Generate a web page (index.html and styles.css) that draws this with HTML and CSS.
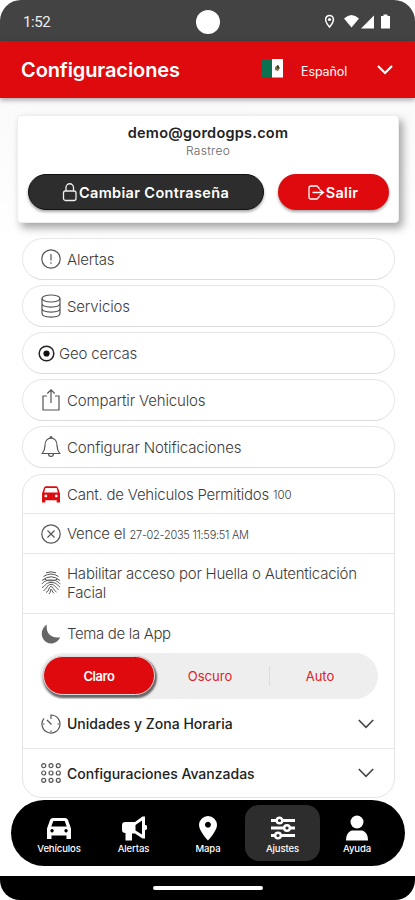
FILE: index.html
```html
<!DOCTYPE html>
<html lang="es">
<head>
  <meta charset="UTF-8">
  <meta name="viewport" content="width=device-width, initial-scale=1.0">
  <title>Configuraciones</title>
  <link rel="stylesheet" href="styles.css">
</head>
<body>
  <div class="status">
    <span class="clock">1:52</span>
    <span class="camera"></span>
    <svg class="status-icons" width="68" height="16" viewBox="0 0 68 16">
      <path d="M3.500 1.500a3.900 3.900 0 0 0-3.900 3.900C-.4 8.500 3.500 13 3.500 13s3.900-4.500 3.900-7.600A3.900 3.900 0 0 0 3.500 1.500z" transform="translate(1)" fill="none" stroke="#fff" stroke-width="1.500"/>
      <circle cx="4.500" cy="5.500" r="1.600" fill="#fff"/>
      <path d="M19 4.500Q26.500 -2.500 34 4.500L26.500 13.500z" fill="#fff"/>
      <path d="M49 1.500V14.500H36z" fill="#fff"/>
      <path d="M58.500 .5h4V2H65V14.500H56V2h2.500z" fill="#fff"/>
    </svg>
  </div>

  <header class="topbar">
    <h1>Configuraciones</h1>
    <svg class="flag" width="29" height="19" viewBox="0 0 29 19">
      <path d="M0 0h10v18.500H0z" fill="#0b7150"/>
      <path d="M10 0h11v18.500H10z" fill="#fff"/>
      <path d="M27 0h1.500v18.500H27z" fill="#c80d2b"/>
      <path d="M13 8l3-2 2 3-2 3-3-1z" fill="#85703f"/>
      <path d="M15 6l2 1v3l-2-1z" fill="#3f3a2c"/>
    </svg>
    <span class="lang">Español</span>
    <svg class="lang-arrow" width="16" height="10" viewBox="0 0 16 10"><path d="M1 1l7 7 7-7" fill="none" stroke="#fff" stroke-width="2.200"/></svg>
  </header>

  <main>
    <section class="account">
      <strong class="email">demo@gordogps.com</strong>
      <span class="role">Rastreo</span>
      <div class="buttons">
        <button class="btn dark">
          <svg width="16" height="19" viewBox="0 0 16 19" fill="none" stroke="#eee" stroke-width="1.300"><rect x="1.500" y="8" width="12.500" height="9.500" rx="2"/><path d="M4 8V4.500a3.750 3.750 0 0 1 7.500 0V8"/></svg>
          <span>Cambiar Contraseña</span>
        </button>
        <button class="btn red">
          <svg width="17" height="15" viewBox="0 0 17 15" fill="none" stroke="#fff" stroke-width="1.300"><path d="M11 4V3L9 1H3a2 2 0 0 0-2 2v9a2 2 0 0 0 2 2h6l2-2v-1M4.500 7.500H15M11.500 4.500l4 3-4 3"/></svg>
          <span>Salir</span>
        </button>
      </div>
    </section>

    <nav class="links">
      <a class="link">
        <svg class="icon" viewBox="0 0 20 20"><circle cx="10" cy="10" r="9.200"/><path d="M10 5v6.500M10 13.300v1.500"/></svg>
        <span>Alertas</span>
      </a>
      <a class="link">
        <svg class="icon tall" viewBox="0 0 20 24"><ellipse cx="10" cy="4.500" rx="9" ry="3.500"/><path d="M1 4.500v15c0 4.700 18 4.700 18 0v-15M1 9.500c0 4.700 18 4.700 18 0M1 14.500c0 4.700 18 4.700 18 0"/></svg>
        <span>Servicios</span>
      </a>
      <a class="link geo">
        <svg class="icon target" viewBox="0 0 17 17"><circle cx="8.500" cy="8.500" r="7.300"/><circle class="dot" cx="8.500" cy="8.500" r="3.100"/></svg>
        <span>Geo cercas</span>
      </a>
      <a class="link">
        <svg class="icon tall" viewBox="0 0 20 24"><path d="M6 8H2v14h16V8h-4M10 15V2M6.300 5.500L10 1.800l3.700 3.700"/></svg>
        <span>Compartir Vehiculos</span>
      </a>
      <a class="link">
        <svg class="icon tall" viewBox="0 0 20 24"><path d="M1.200 18.500c2-2.500 2.800-4 2.800-8C4 6 6.500 3.200 10 3.200s6 2.800 6 7.300c0 4 .8 5.500 2.800 8zM7.500 18.500c0 4 5 4 5 0M9 3c0-2 2-2 2 0"/></svg>
        <span>Configurar Notificaciones</span>
      </a>
    </nav>

    <section class="panel">
      <div class="row cars">
        <svg class="icon car" viewBox="0 0 20 18"><path fill-rule="evenodd" d="M.5 8l2-6q.5-1.700 2-1.700h11q1.500 0 2 1.700l2 6v9.500h-3.500V15H4v2.500H.5zM4 2.200L2.800 6.800h14.400L16 2.200zM4.500 9a1.500 1.500 0 1 0 .1 0zM15.500 9a1.500 1.500 0 1 0 .1 0z"/></svg>
        <span>Cant. de Vehiculos Permitidos</span> <small>100</small>
      </div>
      <div class="row expires">
        <svg class="icon" viewBox="0 0 20 20"><circle cx="10" cy="10" r="9.200"/><path d="M6.500 6.500l7 7M13.500 6.500l-7 7"/></svg>
        <span>Vence el</span> <small class="date">27-02-2035 11:59:51 AM</small>
      </div>
      <div class="row finger">
        <svg class="icon tall print" viewBox="0 0 20 24"><path d="M5 1.800q5-2 10 0M2.500 5.500q7.500-5 15 0M1 9.500q9-7.500 18 0M3.500 8c4 2.500 9 2.500 13 0M.8 13c3-3.500 6-4 9.200-4s6.200.5 9.200 4M1 16.500c3-.5 3-5 9-5s6.500 3 9 4.500M2.500 19.500c4-1.500 3-6 7.500-6s4.500 3.500 7.500 5M5 21.500c3.500-1.500 2.500-6 5-6s2 3.500 5.500 5.500M8 23c2-1.500 1-5 2-5s1 3 3 4.500"/></svg>
        <p>Habilitar acceso por Huella o Autenticación<br>Facial</p>
      </div>
      <div class="row theme">
        <svg class="icon moon" viewBox="0 0 21 22"><path d="M6 .5C4.500 8 9 16.500 20.500 14.500 17 23 6 23.500 2 16.500-1.200 11 .3 4 6 .5z"/></svg>
        <span>Tema de la App</span>
      </div>
      <div class="segmented">
        <span class="seg active">Claro</span>
        <span class="seg">Oscuro</span>
        <span class="seg auto">Auto</span>
      </div>
      <div class="row fold units">
        <svg class="icon" viewBox="0 0 20 20"><path d="M10 5V1a9 9 0 1 1-7 3.300M6 6l4.500 4.500M2 10h1.500M10 18v-1.500M18 10h-1.500"/></svg>
        <span>Unidades y Zona Horaria</span>
        <svg class="arrow" viewBox="0 0 16 10"><path d="M.8 1L8 8.300 15.200 1"/></svg>
      </div>
      <div class="row fold advanced">
        <svg class="icon" viewBox="0 0 20 20"><circle cx="2.700" cy="2.700" r="2"/><circle cx="10" cy="2.700" r="2"/><circle cx="17.300" cy="2.700" r="2"/><circle cx="2.700" cy="10" r="2"/><circle cx="10" cy="10" r="2"/><circle cx="17.300" cy="10" r="2"/><circle cx="2.700" cy="17.300" r="2"/><circle cx="10" cy="17.300" r="2"/><circle cx="17.300" cy="17.300" r="2"/></svg>
        <span>Configuraciones Avanzadas</span>
        <svg class="arrow" viewBox="0 0 16 10"><path d="M.8 1L8 8.300 15.200 1"/></svg>
      </div>
    </section>
  </main>

  <nav class="tabs">
    <a class="tab">
      <svg viewBox="0 0 26 26"><path fill-rule="evenodd" d="M1 13.500L4 5q.8-2 3-2h12q2.200 0 3 2l3 8.500V24h-4.500v-3.500h-15V24H1zM7.300 6L5.300 11.500h15.400L18.700 6zM6 14a1.700 1.700 0 1 0 .1 0zM20 14a1.700 1.700 0 1 0 .1 0z"/></svg>
      <span>Vehículos</span>
    </a>
    <a class="tab">
      <svg viewBox="0 0 26 26"><path fill-rule="evenodd" d="M24 1.500V10a2.500 2.500 0 0 1 0 5v8.500h-2.500L14 18.500h-3V25.500H4.500V18Q1 18 1 15v-5q0-3 3.500-3H14l7.500-5.500zM21 5.500L14.500 10v5.500L21 19.500z"/></svg>
      <span>Alertas</span>
    </a>
    <a class="tab">
      <svg viewBox="0 0 26 26"><path fill-rule="evenodd" d="M13 1a9 9 0 0 0-9 9c0 6 9 15.500 9 15.500S22 16 22 10a9 9 0 0 0-9-9zM13 6.800a3 3 0 1 1-.1 0z"/></svg>
      <span>Mapa</span>
    </a>
    <a class="tab current">
      <svg viewBox="0 0 26 26"><path d="M1 4h24v3H1zM1 11.500h24v3H1zM1 19h24v3H1z"/><g fill="#2d2d2d" stroke="#fff" stroke-width="2.400"><circle cx="9.500" cy="5.500" r="2.800"/><circle cx="17" cy="13" r="2.800"/><circle cx="8" cy="20.500" r="2.800"/></g></svg>
      <span>Ajustes</span>
    </a>
    <a class="tab">
      <svg viewBox="0 0 26 26"><circle cx="13" cy="7" r="6.500"/><path d="M2 25.500c0-7.500 4-10 7-10h8c3 0 7 2.500 7 10z"/></svg>
      <span>Ayuda</span>
    </a>
  </nav>

  <footer class="system"><span class="handle"></span></footer>
</body>
</html>
```

FILE: styles.css
```css
* {
  box-sizing: border-box;
}
body {
  margin: 0;
  height: 900px;
  display: flex;
  flex-direction: column;
  overflow: hidden;
  background: #fff;
  color: #3c3c3c;
  font-family: Inter, "Liberation Sans", sans-serif;
}
.status {
  display: grid;
  grid-template-columns: 1fr 24px 1fr;
  align-items: center;
  height: 41px;
  flex: none;
  padding: 2px 22px 0 23px;
  background: #434343;
  border-radius: 21px 21px 0 0;
}
.clock {
  color: #eee;
  font: 15px Roboto, sans-serif;
  letter-spacing: -0.4px;
}
.camera {
  width: 24px;
  height: 24px;
  border-radius: 50%;
  background: #fff;
}
.status-icons {
  justify-self: end;
}
.topbar {
  position: relative;
  display: flex;
  align-items: center;
  height: 57px;
  flex: none;
  padding: 0 22px 0 21px;
  background: #df0a0d;
  color: #fff;
  box-shadow: 0 2px 5px rgba(0, 0, 0, 0.35);
}
h1 {
  flex: 1;
  margin: 0;
  font-size: 20px;
  font-weight: 600;
  letter-spacing: -0.1px;
}
.flag {
  margin: -3px 10px 0 0;
}
.lang {
  width: 48px;
  margin: 4px 28px 0 0;
  font-size: 12.5px;
  letter-spacing: -0.1px;
}
main {
  height: 702px;
  flex: none;
  padding: 17px 0 0;
  background: linear-gradient(#fafafa, #fff 150px);
}
.account {
  display: flex;
  flex-direction: column;
  align-items: center;
  width: 382px;
  height: 108px;
  margin: 0 0 15px 17px;
  padding-top: 7px;
  border: 1px solid #eee;
  border-radius: 4px;
  background: #fff;
  box-shadow: 4px 5px 9px rgba(0, 0, 0, 0.35);
}
.email {
  color: #222;
  font-size: 14.5px;
  font-weight: 600;
  line-height: 19px;
  letter-spacing: 0.25px;
}
.role {
  color: #666;
  font-size: 12px;
  font-weight: 300;
  line-height: 17px;
  letter-spacing: 0.3px;
}
.buttons {
  display: flex;
  gap: 14px;
  margin-top: 15px;
}
.btn {
  display: flex;
  align-items: center;
  justify-content: center;
  gap: 1px;
  height: 36px;
  padding: 0;
  border: 0;
  border-radius: 18px;
  color: #fff;
  font: 600 14.5px Inter, sans-serif;
  box-shadow: 0 2px 3px rgba(0, 0, 0, 0.35);
}
.dark {
  width: 236px;
  background: #2d2d2d;
  border: 1px solid #111;
  letter-spacing: 0.35px;
}
.red {
  width: 111px;
  background: #df0a0d;
  letter-spacing: 0.3px;
}
.links {
  display: flex;
  flex-direction: column;
  gap: 5px;
  margin: 0 20px 6px 22px;
}
.link {
  display: flex;
  align-items: center;
  gap: 6px;
  height: 42px;
  padding-left: 18px;
  border: 1px solid #e6e6e6;
  border-bottom-color: #dcdcdc;
  border-radius: 21px;
  background: #fff;
  font-size: 15px;
  font-weight: 300;
  letter-spacing: -0.15px;
}
.geo {
  padding-left: 15px;
  gap: 4px;
}
.icon {
  width: 20px;
  height: 20px;
  flex: none;
  fill: none;
  stroke: #555;
  stroke-width: 1.2;
}
.tall {
  height: 24px;
}
.print {
  stroke-width: 1;
}
.target {
  width: 17px;
  height: 17px;
  stroke: #222;
  stroke-width: 1.5;
}
.target .dot {
  fill: #111;
  stroke: none;
}
.panel {
  height: 324px;
  margin: 0 20px 0 22px;
  border: 1px solid #e4e4e4;
  border-radius: 20px;
  background: #fff;
}
.row {
  display: flex;
  align-items: center;
  padding-left: 18px;
  border-bottom: 1px solid #e8e8e8;
  font-size: 15px;
  font-weight: 300;
  letter-spacing: -0.23px;
}
.row .icon {
  margin-right: 6px;
}
.row small {
  margin: 2px 0 0 4px;
  font-size: 11.5px;
  letter-spacing: 0;
}
.row .date {
  font-size: 11px;
  letter-spacing: -0.27px;
}
.row p {
  margin: 0;
  line-height: 19px;
  white-space: nowrap;
}
.cars {
  height: 39px;
}
.row .car {
  height: 17px;
  fill: #df0a0d;
  stroke: none;
}
.expires {
  height: 40px;
}
.finger {
  height: 60px;
  padding-bottom: 1px;
}
.theme {
  height: 39px;
  border: 0;
  letter-spacing: -0.35px;
}
.moon {
  fill: #666;
  stroke: none;
}
.segmented {
  display: flex;
  width: 338px;
  height: 46px;
  margin-left: 17px;
  padding: 3px;
  border-radius: 23px;
  background: #eee;
}
.seg {
  flex: 1;
  display: flex;
  align-items: center;
  justify-content: center;
  color: #dc2127;
  font-size: 13px;
}
.seg.active {
  margin-bottom: 1px;
  border: 1px solid #ddd;
  border-radius: 20px;
  background: #df0a0d;
  color: #fff;
  font-weight: 600;
  letter-spacing: -0.4px;
  box-shadow: 1px 2px 2px 1px #666;
}
.auto {
  background: linear-gradient(#ddd, #ddd) 4px center / 1px 20px no-repeat;
}
.fold {
  height: 50px;
  padding-right: 20px;
  color: #222;
  font-size: 14px;
  font-weight: 500;
  letter-spacing: 0;
}
.fold .arrow {
  width: 16px;
  height: 10px;
  margin-left: auto;
  fill: none;
  stroke: #444;
  stroke-width: 1.6;
}
.advanced {
  height: 48px;
  border: 0;
}
.tabs {
  display: flex;
  align-items: center;
  justify-content: center;
  height: 66px;
  flex: none;
  margin: 0 10px 0 11px;
  border-radius: 33px;
  background: #000;
}
.tab {
  display: flex;
  flex-direction: column;
  align-items: center;
  width: 74.5px;
  height: 56px;
  padding-top: 10px;
  border-radius: 14px;
  color: #fff;
  font-size: 9.5px;
  font-weight: 500;
  letter-spacing: -0.1px;
}
.tab svg {
  width: 26px;
  height: 26px;
  fill: #fff;
  margin-bottom: 2px;
}
.tab.current {
  background: #2d2d2d;
}
.system {
  display: flex;
  justify-content: center;
  height: 24px;
  flex: none;
  margin-top: auto;
  padding-top: 10px;
  border-radius: 0 0 20px 20px;
  background: #000;
}
.handle {
  width: 110px;
  height: 4px;
  border-radius: 2px;
  background: #fff;
}
```
